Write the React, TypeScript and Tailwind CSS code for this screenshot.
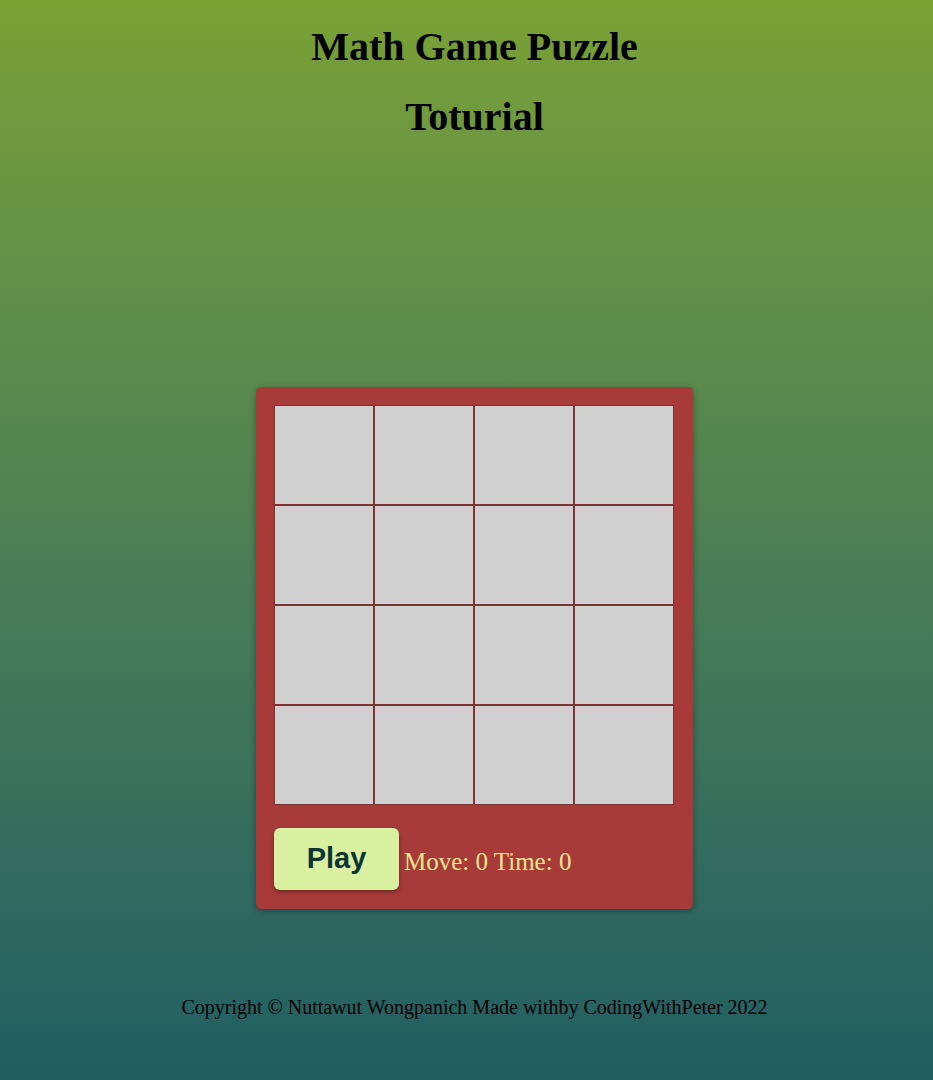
import React from "react";

const cells = Array.from({ length: 16 }, (_, i) => i);

export default function App() {
  return (
    <div className="min-h-screen w-full pl-[16px] bg-gradient-to-b from-[#79a133] to-[#1f5e62] flex flex-col items-center font-['Liberation_Serif',serif] text-black">
      <h1 className="mt-[24px] text-[40px] leading-[46px] font-bold">Math Game Puzzle</h1>
      <h1 className="mt-[24px] text-[40px] leading-[46px] font-bold">Toturial</h1>

      <div className="mt-[247px] w-[437px] rounded-[5px] bg-[#a83a3a] px-[18px] pt-[18px] pb-[19px] shadow-[0_2px_6px_rgba(0,0,0,0.35)]">
        <div className="grid grid-cols-4 w-[400px]">
          {cells.map((c) => (
            <div key={c} className="h-[100px] w-[100px] border border-[#7a3434] bg-[#d0d0d0]" />
          ))}
        </div>
        <div className="mt-[23px] flex items-center gap-[5px]">
          <button className="h-[62px] w-[125px] rounded-[6px] bg-[#d8f0a0] text-[29px] font-bold text-[#0b3535] font-['Liberation_Sans',sans-serif] shadow-[0_2px_4px_rgba(0,0,0,0.35)]">
            Play
          </button>
          <span className="mt-[6px] text-[25px] text-[#efe78e]">Move: 0 Time: 0</span>
        </div>
      </div>

      <footer className="mt-auto mb-[58px] text-[20px]">
        Copyright © Nuttawut Wongpanich Made withby CodingWithPeter 2022
      </footer>
    </div>
  );
}
